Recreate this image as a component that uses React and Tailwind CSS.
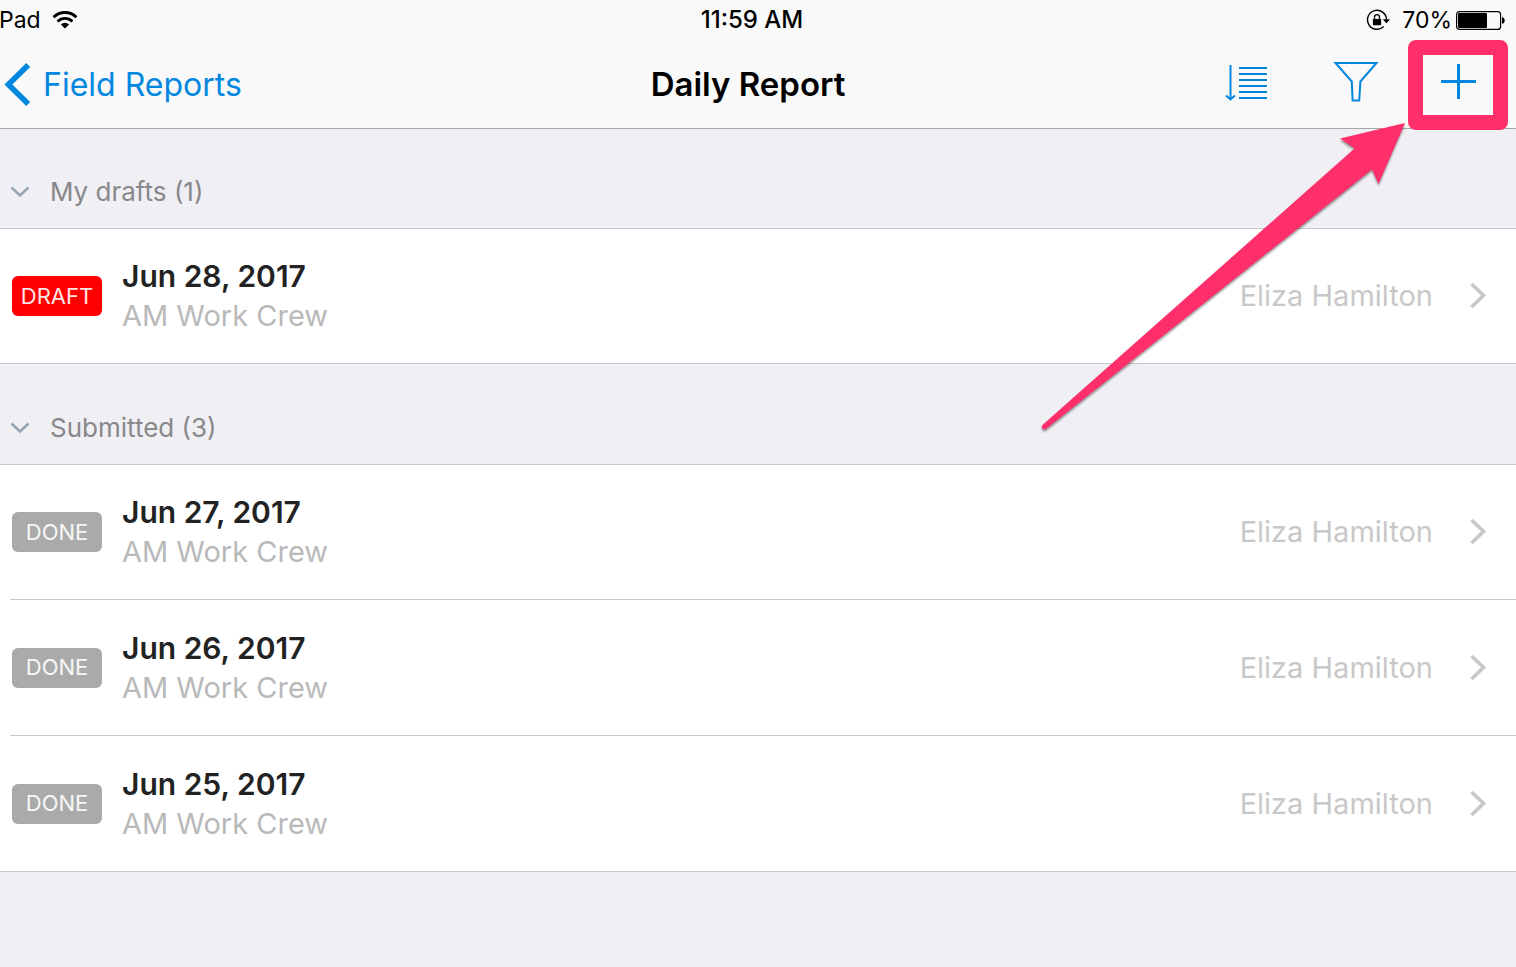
import { useState } from 'react';

const sections = [
  {
    id: 'drafts',
    title: 'My drafts',
    reports: [
      { id: 1, date: 'Jun 28, 2017', crew: 'AM Work Crew', author: 'Eliza Hamilton', status: 'DRAFT' },
    ],
  },
  {
    id: 'submitted',
    title: 'Submitted',
    reports: [
      { id: 2, date: 'Jun 27, 2017', crew: 'AM Work Crew', author: 'Eliza Hamilton', status: 'DONE' },
      { id: 3, date: 'Jun 26, 2017', crew: 'AM Work Crew', author: 'Eliza Hamilton', status: 'DONE' },
      { id: 4, date: 'Jun 25, 2017', crew: 'AM Work Crew', author: 'Eliza Hamilton', status: 'DONE' },
    ],
  },
];

const WifiIcon = () => (
  <svg className="w-[26px] h-5" viewBox="0 0 26 20" fill="none" stroke="black" strokeWidth="2.8">
    <path d="M1.6 7.2a16.2 16.2 0 0 1 22.8 0" />
    <path d="M5.6 11.4a10.5 10.5 0 0 1 14.8 0" />
    <path d="M13 18.6l-4.1-4.1a5.8 5.8 0 0 1 8.2 0z" fill="black" stroke="none" />
  </svg>
);

const RotationLockIcon = () => (
  <svg className="w-6 h-6" viewBox="0 0 24 24" fill="none">
    <path d="M20.500 11.500a9.500 9.500 0 1 0-2.800 7" stroke="black" strokeWidth="1.4" />
    <path d="M16.800 11.200H24l-3.600 4z" fill="black" />
    <rect x="6.900" y="11" width="8.2" height="6.2" rx="0.6" fill="black" />
    <path d="M8.500 11.400V9.200a2.500 2.500 0 0 1 5 0v2.200" stroke="black" strokeWidth="1.3" />
  </svg>
);

const BatteryIcon = () => (
  <svg className="w-[49px] h-5" viewBox="0 0 49 20" fill="none">
    <rect x="0.6" y="1.6" width="44" height="17.8" rx="3" stroke="black" strokeWidth="1.2" />
    <rect x="2" y="3" width="29" height="15" rx="1.2" fill="black" />
    <path d="M46 7.300c3.600 0 3.600 6.400 0 6.400z" fill="black" />
  </svg>
);

const StatusBar = () => (
  <div className="-ml-3 grid h-10 grid-cols-[1fr_auto_1fr] items-center pl-[11px] pr-[11px] text-[23px] text-black">
    <div className="flex items-center gap-[11px]">
      <span>Pad</span>
      <WifiIcon />
    </div>
    <span className="text-[24px] font-medium">11:59 AM</span>
    <div className="flex items-center justify-end">
      <RotationLockIcon />
      <span className="ml-3 mr-1">70%</span>
      <BatteryIcon />
    </div>
  </div>
);

const NavBar = () => (
  <nav className="-ml-5 grid h-[88px] grid-cols-[1fr_auto_1fr] items-center px-5">
    <a href="#field-reports" className="flex items-center gap-3 pl-1 text-[32px] text-[#0287e0]">
      <svg className="w-[27px] h-11" viewBox="0 0 27 44" fill="none" stroke="currentColor" strokeWidth="5.6">
        <path d="M24.200 2L4.400 21.500l19.800 19.500" />
      </svg>
      Field Reports
    </a>
    <h1 className="text-[33px] font-semibold text-black">Daily Report</h1>
    <div className="-mr-3 flex items-center justify-end text-[#0287e0]">
      <button aria-label="Sort" className="flex h-[90px] w-[114px] items-center justify-center">
        <svg className="w-12 h-12" viewBox="0 0 48 48" fill="none" stroke="currentColor" strokeWidth="2">
          <path d="M7.5 4v34" />
          <path d="M3 34.5l4.5 4 4.5-4" />
          <path d="M16 7h28M16 13h28M16 19h28M16 25h28M16 31h28M16 37h28" />
        </svg>
      </button>
      <button aria-label="Filter" className="flex h-[90px] w-[104px] items-center justify-center">
        <svg className="w-12 h-12" viewBox="0 0 48 48" fill="none" stroke="currentColor" strokeWidth="2">
          <path d="M3.5 2h41L28.4 20.5l-1.2 19h-6.6l-.8-19z" />
        </svg>
      </button>
      <button aria-label="Add report" className="relative flex h-[90px] w-[100px] items-center justify-center">
        <svg className="w-12 h-12" viewBox="0 0 48 48" fill="none" stroke="currentColor" strokeWidth="3">
          <path d="M7 20.5h35M24.5 3v35" />
        </svg>
        <span className="absolute inset-0 rounded-lg border-[15px] border-[#ff2f6c]" />
      </button>
    </div>
  </nav>
);

// Arrow that points at the add button
const CalloutArrow = () => (
  <svg
    className="pointer-events-none absolute right-[106px] top-[118px] z-20 h-[318px] w-[374px] drop-shadow-[0_2px_1px_rgba(0,0,0,0.4)]"
    viewBox="0 0 374 318"
  >
    <path
      d="M369 5L304 20.5l14.500 10L6.500 307c-2 2.200.8 6 3.500 4L336 51.500l6.500 14.500z"
      fill="#ff2f6c"
    />
  </svg>
);

const ReportRow = ({ report }) => (
  <li className="group bg-white pl-[10px] first:border-t first:border-[#c8c7cc] last:border-b last:border-[#c8c7cc]">
    <a
      href={`#report-${report.id}`}
      className="flex h-[136px] items-center border-b border-[#c8c7cc] pl-[2px] pr-[29px] group-first:h-[135px] group-last:h-[135px] group-last:border-b-0 group-only:h-[134px]"
    >
      <span
        className={`flex h-10 w-[90px] shrink-0 items-center justify-center rounded-md text-[22px] text-white/90 ${
          report.status === 'DRAFT' ? 'bg-[#ff0000]' : 'bg-[#aaaaaa]'
        }`}
      >
        {report.status}
      </span>
      <div className="ml-5 flex-1 leading-10">
        <p className="text-[30px] font-semibold text-[#222222]">{report.date}</p>
        <p className="text-[29px] text-[#b9b9b9]">{report.crew}</p>
      </div>
      <span className="text-[29px] text-[#c8c8c8]">{report.author}</span>
      <svg className="ml-9 h-7 w-[18px]" viewBox="0 0 18 28" fill="none" stroke="#c7c7cc" strokeWidth="3.6">
        <path d="M2.5 2l12 11.500-12 11.500" />
      </svg>
    </a>
  </li>
);

const ReportSection = ({ section }) => {
  const [open, setOpen] = useState(true);

  return (
    <section>
      <button
        onClick={() => setOpen(!open)}
        aria-expanded={open}
        className="flex h-[100px] w-full items-end pb-4 pl-[10px] text-left text-[26px] leading-10 text-[#88888a]"
      >
        <svg className="h-10 w-5" viewBox="0 0 20 40" fill="none" stroke="#98a5b3" strokeWidth="2.6">
          <path d={open ? 'M1.500 15.500l8.500 8 8.500-8' : 'M6 11l8 9-8 9'} />
        </svg>
        <span className="ml-5">
          {section.title} ({section.reports.length})
        </span>
      </button>
      {open && (
        <ul>
          {section.reports.map((report) => (
            <ReportRow key={report.id} report={report} />
          ))}
        </ul>
      )}
    </section>
  );
};

export default function App() {
  return (
    <div className="relative min-h-screen overflow-x-hidden bg-[#efeff4] font-['Inter',sans-serif]">
      <header className="relative z-10 bg-[#f9f9f9] shadow-[0_1px_0_#a7a7aa]">
        <StatusBar />
        <NavBar />
      </header>
      <main>
        {sections.map((section) => (
          <ReportSection key={section.id} section={section} />
        ))}
      </main>
      <CalloutArrow />
    </div>
  );
}
